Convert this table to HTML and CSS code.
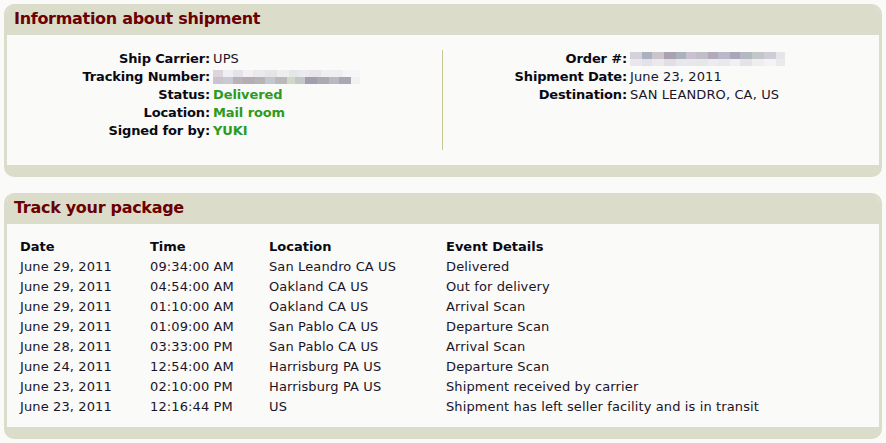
FILE: index.html
```html
<!DOCTYPE html>
<html>
<head>
<meta charset="utf-8">
<title>Shipment</title>
<link rel="stylesheet" href="styles.css">
</head>
<body>
<section class="panel panel-info">
  <h2 class="panel-head">Information about shipment</h2>
  <div class="panel-body info-body">
    <div class="info-col info-left">
      <dl class="info-list">
        <dt>Ship Carrier:</dt><dd>UPS</dd>
        <dt>Tracking Number:</dt><dd><span class="blur blur-track"></span></dd>
        <dt>Status:</dt><dd class="ok">Delivered</dd>
        <dt>Location:</dt><dd class="ok">Mail room</dd>
        <dt>Signed for by:</dt><dd class="ok">YUKI</dd>
      </dl>
    </div>
    <div class="info-col info-right">
      <dl class="info-list">
        <dt>Order #:</dt><dd><span class="blur blur-order"></span></dd>
        <dt>Shipment Date:</dt><dd>June 23, 2011</dd>
        <dt>Destination:</dt><dd>SAN LEANDRO, CA, US</dd>
      </dl>
    </div>
  </div>
</section>

<section class="panel panel-track">
  <h2 class="panel-head">Track your package</h2>
  <div class="panel-body track-body">
    <table class="track">
      <thead>
        <tr><th class="c-date">Date</th><th class="c-time">Time</th><th class="c-loc">Location</th><th>Event Details</th></tr>
      </thead>
      <tbody>
        <tr><td>June 29, 2011</td><td>09:34:00 AM</td><td>San Leandro CA US</td><td>Delivered</td></tr>
        <tr><td>June 29, 2011</td><td>04:54:00 AM</td><td>Oakland CA US</td><td>Out for delivery</td></tr>
        <tr><td>June 29, 2011</td><td>01:10:00 AM</td><td>Oakland CA US</td><td>Arrival Scan</td></tr>
        <tr><td>June 29, 2011</td><td>01:09:00 AM</td><td>San Pablo CA US</td><td>Departure Scan</td></tr>
        <tr><td>June 28, 2011</td><td>03:33:00 PM</td><td>San Pablo CA US</td><td>Arrival Scan</td></tr>
        <tr><td>June 24, 2011</td><td>12:54:00 AM</td><td>Harrisburg PA US</td><td>Departure Scan</td></tr>
        <tr><td>June 23, 2011</td><td>02:10:00 PM</td><td>Harrisburg PA US</td><td>Shipment received by carrier</td></tr>
        <tr><td>June 23, 2011</td><td>12:16:44 PM</td><td>US</td><td>Shipment has left seller facility and is in transit</td></tr>
      </tbody>
    </table>
  </div>
</section>
</body>
</html>
```

FILE: styles.css
```css
html, body {
  margin: 0;
  padding: 0;
  background: #fafaf8;
}
body {
  padding: 4px 4px 0 4px;
  font-family: "DejaVu Sans", Verdana, sans-serif;
  font-size: 13px;
  letter-spacing: 0.12px;
  color: #1a1428;
}
.panel {
  width: 878px;
  box-sizing: border-box;
  border: 3px solid #dcdccb;
  border-top: 0;
  border-bottom-width: 12px;
  border-radius: 10px;
  background: #fafaf8;
  overflow: hidden;
}
.panel-track {
  margin-top: 16px;
}
.panel-head {
  margin: 0;
  height: 31px;
  line-height: 29px;
  padding-left: 7px;
  background: #dcdccb;
  color: #6a0000;
  font-size: 16px;
  letter-spacing: -0.3px;
  font-weight: bold;
}
.info-body {
  display: flex;
  height: 130px;
  box-sizing: border-box;
  padding-top: 15px;
}
.info-col {
  height: 100px;
}
.info-left {
  width: 435px;
  border-right: 1px solid #c8c896;
}
.info-right {
  flex: 1;
}
.info-list {
  margin: 0;
  display: grid;
  row-gap: 0;
  line-height: 18px;
}
.info-left .info-list {
  grid-template-columns: 203px auto;
}
.info-right .info-list {
  grid-template-columns: 184px auto;
}
.info-list dt {
  font-weight: bold;
  letter-spacing: -0.15px;
  text-align: right;
  color: #0a0a14;
  margin: 0;
}
.info-list dd {
  margin: 0;
  padding-left: 3px;
  display: flex;
  align-items: center;
}
.info-list dd.ok {
  color: #2f9a1e;
  font-weight: bold;
  letter-spacing: -0.1px;
}
.blur {
  display: block;
  height: 14px;
}
.blur-track {
  width: 147px;
  background:
    linear-gradient(to right,
      #dcd6dc 0 10px, #f0eef2 10px 20px, #e4e2ea 20px 30px, #f2f0f2 30px 40px,
      #ebe9ee 40px 52px, #e6e4e6 52px 64px, #eeeef0 64px 76px, #e4e6e8 76px 86px,
      #eceaee 86px 96px, #e8e6ea 96px 108px, #eef0f0 108px 118px, #f0eef2 118px 130px,
      #f6f6f8 130px 147px) top / 100% 50% no-repeat,
    linear-gradient(to right,
      #cac2cc 0 10px, #c8cad2 10px 20px, #b8b2ba 20px 30px, #b2aeb2 30px 42px,
      #b6b4b4 42px 52px, #c2c8d0 52px 62px, #b9b9b9 62px 74px, #d2d8c8 74px 82px,
      #c2c8c8 82px 92px, #a29eb0 92px 104px, #aaaab0 104px 116px, #b6bac2 116px 126px,
      #aaa6b2 126px 138px, #f2f2f4 138px 147px) bottom / 100% 50% no-repeat;
}
.blur-order {
  width: 155px;
  background:
    linear-gradient(to right,
      #d6d0da 0 12px, #aab2c0 12px 22px, #ccc4cc 22px 34px, #aaa2b2 34px 46px,
      #aab2ba 46px 56px, #c8c2d0 56px 66px, #c2bec8 66px 78px, #b2aaba 78px 88px,
      #bab8c8 88px 100px, #aca4b8 100px 110px, #b4b8c0 110px 122px, #c2c8c8 122px 134px,
      #d0ccd6 134px 146px, #e6e6ea 146px 155px) top / 100% 50% no-repeat,
    linear-gradient(to right,
      #eae6ee 0 12px, #e2e2ea 12px 22px, #ece8ee 22px 34px, #e2dee8 34px 46px,
      #e6e8ec 46px 56px, #eae6ee 56px 66px, #e4e8e8 66px 78px, #eeeaf0 78px 88px,
      #e8e8ee 88px 100px, #eef0f2 100px 110px, #e4e4e8 110px 122px, #eeeef0 122px 134px,
      #f4f4f6 134px 146px, #e8eaec 146px 155px) bottom / 100% 50% no-repeat;
}
.track-body {
  height: 203px;
  box-sizing: border-box;
  padding: 12px 0 0 13px;
}
.track {
  border-collapse: collapse;
}
.track th, .track td {
  padding: 0;
  height: 20px;
  text-align: left;
  vertical-align: middle;
  white-space: nowrap;
}
.track th {
  font-weight: bold;
  letter-spacing: 0;
  color: #0a0a14;
}
.track .c-date { width: 130px; }
.track .c-time { width: 119px; }
.track .c-loc { width: 177px; }
```
